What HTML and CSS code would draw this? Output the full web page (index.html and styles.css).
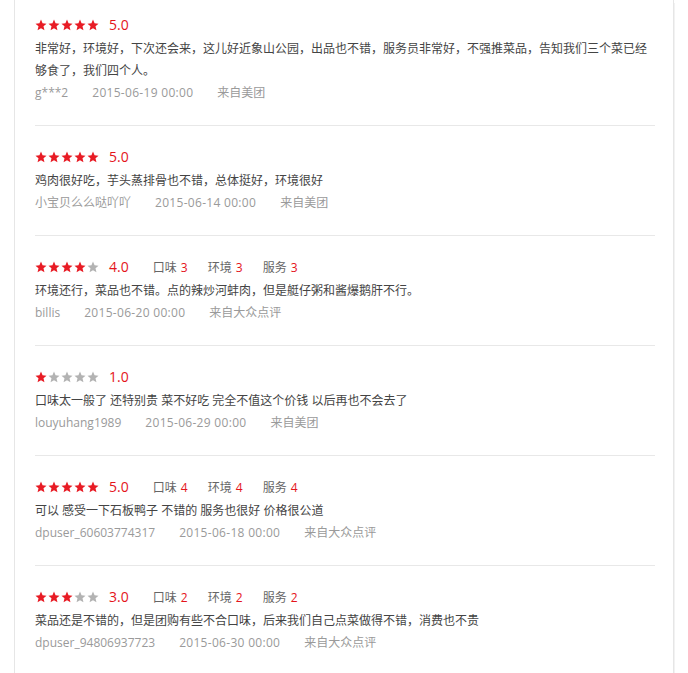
FILE: index.html
```html
<!DOCTYPE html>
<html lang="zh-CN">
<head>
<meta charset="utf-8">
<title>评价</title>
<link rel="stylesheet" href="styles.css">
</head>
<body>
<svg width="0" height="0" class="defs">
  <defs>
    <polygon id="star" points="12,1.2 15.1,8.6 23,9.3 17,14.6 18.9,22.5 12,18.3 5.1,22.5 7,14.6 1,9.3 8.9,8.6"/>
  </defs>
</svg>
<div class="panel">
  <ul class="reviews">
    <li class="review">
      <div class="rating-row">
        <span class="stars">
          <svg class="star on" viewBox="0 0 24 24"><use href="#star"/></svg><svg class="star on" viewBox="0 0 24 24"><use href="#star"/></svg><svg class="star on" viewBox="0 0 24 24"><use href="#star"/></svg><svg class="star on" viewBox="0 0 24 24"><use href="#star"/></svg><svg class="star on" viewBox="0 0 24 24"><use href="#star"/></svg>
        </span>
        <span class="score">5.0</span>
      </div>
      <p class="comment">非常好，环境好，下次还会来，这儿好近象山公园，出品也不错，服务员非常好，不强推菜品，告知我们三个菜已经够食了，我们四个人。</p>
      <div class="meta"><span>g***2</span><span class="date">2015-06-19 00:00</span><span>来自美团</span></div>
    </li>
    <li class="review">
      <div class="rating-row">
        <span class="stars">
          <svg class="star on" viewBox="0 0 24 24"><use href="#star"/></svg><svg class="star on" viewBox="0 0 24 24"><use href="#star"/></svg><svg class="star on" viewBox="0 0 24 24"><use href="#star"/></svg><svg class="star on" viewBox="0 0 24 24"><use href="#star"/></svg><svg class="star on" viewBox="0 0 24 24"><use href="#star"/></svg>
        </span>
        <span class="score">5.0</span>
      </div>
      <p class="comment">鸡肉很好吃，芋头蒸排骨也不错，总体挺好，环境很好</p>
      <div class="meta"><span>小宝贝么么哒吖吖</span><span class="date">2015-06-14 00:00</span><span>来自美团</span></div>
    </li>
    <li class="review">
      <div class="rating-row">
        <span class="stars">
          <svg class="star on" viewBox="0 0 24 24"><use href="#star"/></svg><svg class="star on" viewBox="0 0 24 24"><use href="#star"/></svg><svg class="star on" viewBox="0 0 24 24"><use href="#star"/></svg><svg class="star on" viewBox="0 0 24 24"><use href="#star"/></svg><svg class="star off" viewBox="0 0 24 24"><use href="#star"/></svg>
        </span>
        <span class="score">4.0</span>
        <span class="sub">口味 <em>3</em></span>
        <span class="sub">环境 <em>3</em></span>
        <span class="sub">服务 <em>3</em></span>
      </div>
      <p class="comment">环境还行，菜品也不错。点的辣炒河蚌肉，但是艇仔粥和酱爆鹅肝不行。</p>
      <div class="meta"><span>billis</span><span class="date">2015-06-20 00:00</span><span>来自大众点评</span></div>
    </li>
    <li class="review">
      <div class="rating-row">
        <span class="stars">
          <svg class="star on" viewBox="0 0 24 24"><use href="#star"/></svg><svg class="star off" viewBox="0 0 24 24"><use href="#star"/></svg><svg class="star off" viewBox="0 0 24 24"><use href="#star"/></svg><svg class="star off" viewBox="0 0 24 24"><use href="#star"/></svg><svg class="star off" viewBox="0 0 24 24"><use href="#star"/></svg>
        </span>
        <span class="score">1.0</span>
      </div>
      <p class="comment">口味太一般了 还特别贵 菜不好吃 完全不值这个价钱 以后再也不会去了</p>
      <div class="meta"><span>louyuhang1989</span><span class="date">2015-06-29 00:00</span><span>来自美团</span></div>
    </li>
    <li class="review">
      <div class="rating-row">
        <span class="stars">
          <svg class="star on" viewBox="0 0 24 24"><use href="#star"/></svg><svg class="star on" viewBox="0 0 24 24"><use href="#star"/></svg><svg class="star on" viewBox="0 0 24 24"><use href="#star"/></svg><svg class="star on" viewBox="0 0 24 24"><use href="#star"/></svg><svg class="star on" viewBox="0 0 24 24"><use href="#star"/></svg>
        </span>
        <span class="score">5.0</span>
        <span class="sub">口味 <em>4</em></span>
        <span class="sub">环境 <em>4</em></span>
        <span class="sub">服务 <em>4</em></span>
      </div>
      <p class="comment">可以 感受一下石板鸭子 不错的 服务也很好 价格很公道</p>
      <div class="meta"><span>dpuser_60603774317</span><span class="date">2015-06-18 00:00</span><span>来自大众点评</span></div>
    </li>
    <li class="review">
      <div class="rating-row">
        <span class="stars">
          <svg class="star on" viewBox="0 0 24 24"><use href="#star"/></svg><svg class="star on" viewBox="0 0 24 24"><use href="#star"/></svg><svg class="star on" viewBox="0 0 24 24"><use href="#star"/></svg><svg class="star off" viewBox="0 0 24 24"><use href="#star"/></svg><svg class="star off" viewBox="0 0 24 24"><use href="#star"/></svg>
        </span>
        <span class="score">3.0</span>
        <span class="sub">口味 <em>2</em></span>
        <span class="sub">环境 <em>2</em></span>
        <span class="sub">服务 <em>2</em></span>
      </div>
      <p class="comment">菜品还是不错的，但是团购有些不合口味，后来我们自己点菜做得不错，消费也不贵</p>
      <div class="meta"><span>dpuser_94806937723</span><span class="date">2015-06-30 00:00</span><span>来自大众点评</span></div>
    </li>
  </ul>
</div>
</body>
</html>
```
FILE: styles.css
```css
html, body {
  margin: 0;
  padding: 0;
  background: #fff;
  height: 100%;
  overflow: hidden;
}
body {
  font-family: "Open Sans", "Noto Sans CJK SC", sans-serif;
  font-size: 12px;
  color: #444;
}
.defs {
  position: absolute;
  width: 0;
  height: 0;
}
.panel {
  margin-left: 14px;
  width: 658px;
  min-height: 100%;
  border-left: 1px solid #e6e6e6;
  border-right: 1px solid #e6e6e6;
  box-shadow: 4px 0 0 -3px #f2f2f2;
}
.reviews {
  list-style: none;
  margin: 0;
  padding: 0 18px 0 20px;
}
.review {
  padding: 18px 0 21px;
  border-bottom: 1px solid #e8e8e8;
}
.review:first-child {
  padding-top: 12px;
}
.rating-row {
  display: flex;
  align-items: center;
  height: 26px;
}
.stars {
  display: flex;
  gap: 1px;
}
.star {
  width: 12px;
  height: 12px;
  display: block;
}
.star.on { fill: #e81c25; }
.star.off { fill: #b3b3b3; }
.score {
  margin-left: 10px;
  margin-right: 4px;
  font-size: 14px;
  color: #e4141b;
  line-height: 26px;
}
.sub {
  margin-left: 20px;
  color: #666;
  font-size: 12px;
}
.sub em {
  font-style: normal;
  color: #e4141b;
  margin-left: 1px;
}
.comment {
  margin: 0;
  line-height: 22px;
  color: #444;
}
.meta {
  display: flex;
  gap: 24px;
  line-height: 22px;
  color: #9a9a9a;
}
.date {
  letter-spacing: 0.3px;
}
```
